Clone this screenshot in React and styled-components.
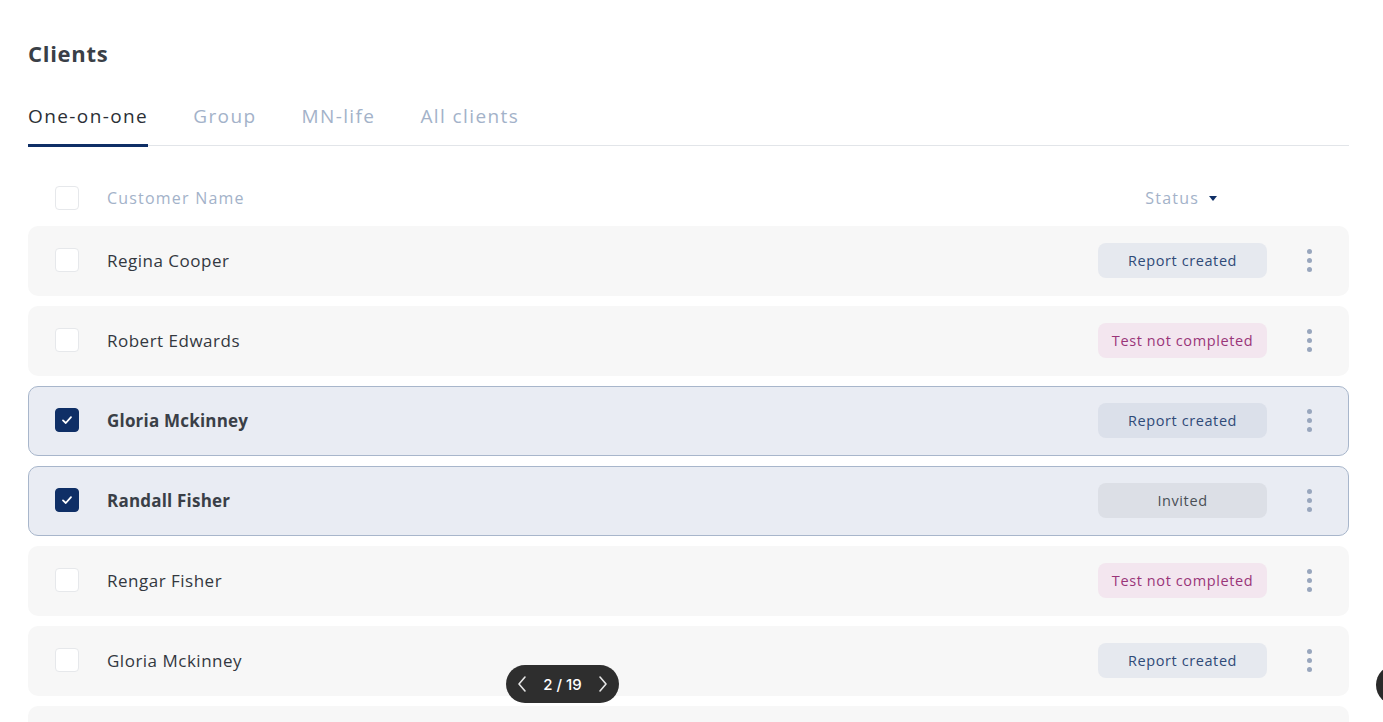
import React, { useState } from "react";
import styled, { createGlobalStyle } from "styled-components";

const GlobalStyle = createGlobalStyle`
  html, body {
    margin: 0;
    padding: 0;
    background: #ffffff;
    overflow: hidden;
  }
  body {
    font-family: "Open Sans", "Liberation Sans", sans-serif;
    color: #2f343b;
  }
`;

const Page = styled.div`
  padding: 38px 34px 0 28px;
  height: 722px;
  box-sizing: border-box;
`;

const Title = styled.h1`
  margin: 0;
  font-size: 22px;
  font-weight: 700;
  color: #3a3f47;
  line-height: 30px;
  letter-spacing: 0.7px;
`;

const Tabs = styled.div`
  display: flex;
  gap: 45px;
  margin-top: 35px;
  border-bottom: 1px solid #e2e5e9;
`;

const Tab = styled.div`
  font-size: 19px;
  line-height: 26px;
  padding-bottom: 15px;
  color: ${(p) => (p.active ? "#2b2f36" : "#a3b2c9")};
  border-bottom: 3px solid ${(p) => (p.active ? "#0f2f66" : "transparent")};
  margin-bottom: -2px;
  letter-spacing: 1.4px;
`;

const HeaderRow = styled.div`
  display: flex;
  align-items: center;
  height: 40px;
  margin-top: 32px;
  margin-bottom: 8px;
  padding: 0 132px 0 27px;
`;

const HeaderLabel = styled.div`
  font-size: 16px;
  color: #a3b2c9;
  flex: ${(p) => (p.grow ? 1 : "none")};
  display: flex;
  align-items: center;
  gap: 10px;
  letter-spacing: 1.2px;
`;

const Caret = styled.span`
  width: 0;
  height: 0;
  border-left: 4px solid transparent;
  border-right: 4px solid transparent;
  border-top: 5px solid #0f2f66;
`;

const List = styled.div`
  display: flex;
  flex-direction: column;
  gap: 10px;
`;

const Row = styled.div`
  display: flex;
  align-items: center;
  height: 70px;
  box-sizing: border-box;
  padding: 0 18px 2px 26px;
  border-radius: 10px;
  background: ${(p) => (p.selected ? "#e9ecf3" : "#f7f7f7")};
  border: 1px solid ${(p) => (p.selected ? "#a8b6cb" : "transparent")};
`;

const Box = styled.div`
  width: 24px;
  height: 24px;
  box-sizing: border-box;
  border-radius: 4px;
  flex: none;
  display: flex;
  align-items: center;
  justify-content: center;
  background: ${(p) => (p.checked ? "#0f2f66" : "#ffffff")};
  border: 1px solid ${(p) => (p.checked ? "#0f2f66" : "#e6e8eb")};
  margin-right: 28px;
`;

const Name = styled.div`
  flex: 1;
  font-size: 17px;
  font-weight: ${(p) => (p.bold ? 700 : 400)};
  color: ${(p) => (p.bold ? "#3a3f47" : "#33383f")};
  letter-spacing: ${(p) => (p.bold ? "0.2px" : "0.5px")};
`;

const badgeColors = {
  report: { bg: "#e6e9ef", sel: "#dbe0ea", fg: "#2f4a78" },
  test: { bg: "#f3e6ef", sel: "#f3e6ef", fg: "#9a3579" },
  invited: { bg: "#dfe2e8", sel: "#dcdfe6", fg: "#4a4f57" },
};

const Badge = styled.div`
  width: 169px;
  height: 35px;
  border-radius: 8px;
  display: flex;
  align-items: center;
  justify-content: center;
  font-size: 14.5px;
  letter-spacing: 0.6px;
  background: ${(p) =>
    p.selected ? badgeColors[p.kind].sel : badgeColors[p.kind].bg};
  color: ${(p) => badgeColors[p.kind].fg};
`;

const Kebab = styled.button`
  width: 42px;
  height: 40px;
  margin-left: 21px;
  border: none;
  background: transparent;
  padding: 0;
  display: flex;
  flex-direction: column;
  align-items: center;
  justify-content: center;
  gap: 4px;
  cursor: pointer;
`;

const Dot = styled.span`
  width: 5px;
  height: 5px;
  border-radius: 50%;
  background: #98a6bd;
`;

const Pager = styled.div`
  position: fixed;
  left: 506px;
  top: 665px;
  width: 113px;
  height: 38px;
  border-radius: 19px;
  background: #2e2e2e;
  color: #ffffff;
  display: flex;
  align-items: center;
  justify-content: space-between;
  padding: 0 10px;
  box-sizing: border-box;
  font-family: Inter, "Liberation Sans", sans-serif;
  font-size: 15px;
  font-weight: 500;
`;

const PagerArrow = styled.span`
  display: flex;
  align-items: center;
`;

const Fab = styled.div`
  position: fixed;
  left: 1376px;
  top: 665px;
  width: 40px;
  height: 40px;
  border-radius: 50%;
  background: #2a2a2a;
`;

const Check = () => (
  <svg width="14" height="14" viewBox="0 0 14 14" fill="none">
    <path
      d="M3 7.4 L5.8 10 L11 4.2"
      stroke="#fff"
      strokeWidth="1.8"
      strokeLinecap="round"
      strokeLinejoin="round"
    />
  </svg>
);

const Chevron = ({ dir }) => (
  <svg width="12" height="18" viewBox="0 0 12 18" fill="none">
    <path
      d={dir === "left" ? "M9 2 L3 9 L9 16" : "M3 2 L9 9 L3 16"}
      stroke="#e6e6e6"
      strokeWidth="1.6"
      strokeLinecap="round"
      strokeLinejoin="round"
    />
  </svg>
);

const labels = {
  report: "Report created",
  test: "Test not completed",
  invited: "Invited",
};

const clients = [
  { name: "Regina Cooper", status: "report", checked: false },
  { name: "Robert Edwards", status: "test", checked: false },
  { name: "Gloria Mckinney", status: "report", checked: true },
  { name: "Randall Fisher", status: "invited", checked: true },
  { name: "Rengar Fisher", status: "test", checked: false },
  { name: "Gloria Mckinney", status: "report", checked: false },
  { name: "Robert Edwards", status: "report", checked: false },
];

const tabs = ["One-on-one", "Group", "MN-life", "All clients"];

export default function App() {
  const [active] = useState(0);

  return (
    <>
      <GlobalStyle />
      <Page>
        <Title>Clients</Title>
        <Tabs>
          {tabs.map((t, i) => (
            <Tab key={t} active={i === active}>
              {t}
            </Tab>
          ))}
        </Tabs>
        <HeaderRow>
          <Box />
          <HeaderLabel grow>Customer Name</HeaderLabel>
          <HeaderLabel>
            Status <Caret />
          </HeaderLabel>
        </HeaderRow>
        <List>
          {clients.map((c, i) => (
            <Row key={i} selected={c.checked}>
              <Box checked={c.checked}>{c.checked && <Check />}</Box>
              <Name bold={c.checked}>{c.name}</Name>
              <Badge kind={c.status} selected={c.checked}>
                {labels[c.status]}
              </Badge>
              <Kebab>
                <Dot />
                <Dot />
                <Dot />
              </Kebab>
            </Row>
          ))}
        </List>
      </Page>
      <Pager>
        <PagerArrow>
          <Chevron dir="left" />
        </PagerArrow>
        <span>2 / 19</span>
        <PagerArrow>
          <Chevron dir="right" />
        </PagerArrow>
      </Pager>
      <Fab />
    </>
  );
}
